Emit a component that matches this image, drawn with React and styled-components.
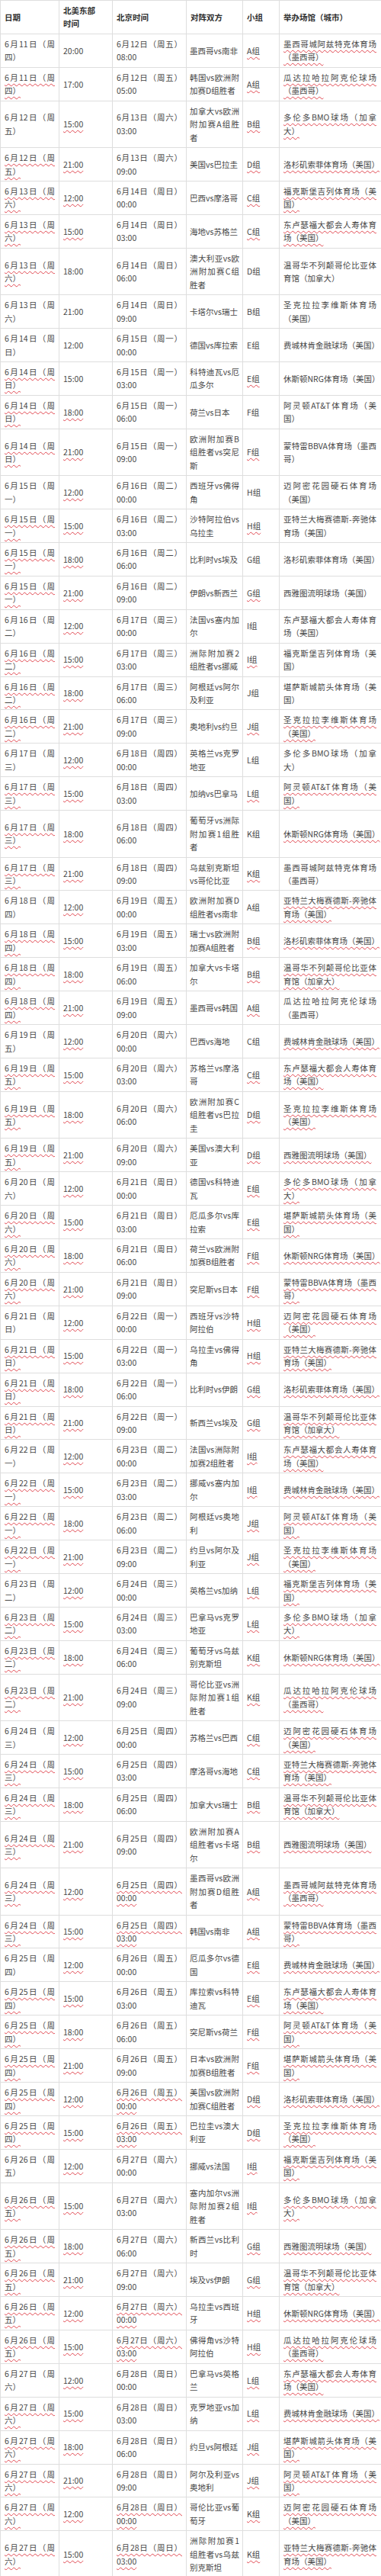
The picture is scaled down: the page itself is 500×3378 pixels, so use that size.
import React from "react";
import styled, { createGlobalStyle, css } from "styled-components";

const GlobalStyle = createGlobalStyle`
  html, body {
    margin: 0;
    padding: 0;
    background: #fff;
  }
  body {
    font-family: "Noto Sans CJK SC", "Noto Sans", sans-serif;
  }
`;

const Table = styled.table`
  width: 500px;
  table-layout: fixed;
  border-collapse: collapse;
  font-size: 10.5px;
  line-height: 17.45px;
  color: #474747;
`;

const Head = styled.th`
  padding: 4px 5px;
  border: 1px solid #dedede;
  text-align: left;
  font-weight: 700;
  color: #2e2e2e;
  vertical-align: middle;
`;

const Cell = styled.td`
  padding: ${(p) => p.$pad || "4px 5px"};
  border: 1px solid #dedede;
  vertical-align: middle;
  text-align: justify;
  ${(p) =>
    p.$wavy &&
    css`
      text-decoration: underline wavy #e0464f;
      text-decoration-thickness: 1px;
      text-underline-offset: 3px;
    `}
`;

// date, ET time, Beijing time, match, group, venue, wavy flags (date time bj group venue)
const rows = [
  ["6月11日（周四）", "20:00", "6月12日（周五）08:00", "墨西哥vs南非", "A组", "墨西哥城阿兹特克体育场（墨西哥）", "00011"],
  ["6月11日（周四）", "17:00", "6月12日（周五）05:00", "韩国vs欧洲附加赛D组胜者", "A组", "瓜达拉哈拉阿克伦球场（墨西哥）", "10011"],
  ["6月12日（周五）", "15:00", "6月13日（周六）03:00", "加拿大vs欧洲附加赛A组胜者", "B组", "多伦多BMO球场（加拿大）", "01011"],
  ["6月12日（周五）", "21:00", "6月13日（周六）09:00", "美国vs巴拉圭", "D组", "洛杉矶索菲体育场（美国）", "11011"],
  ["6月13日（周六）", "12:00", "6月14日（周日）00:00", "巴西vs摩洛哥", "C组", "福克斯堡吉列体育场（美国）", "11011"],
  ["6月13日（周六）", "15:00", "6月14日（周日）03:00", "海地vs苏格兰", "C组", "东卢瑟福大都会人寿体育场（美国）", "11011"],
  ["6月13日（周六）", "18:00", "6月14日（周日）06:00", "澳大利亚vs欧洲附加赛C组胜者", "D组", "温哥华不列颠哥伦比亚体育馆（加拿大）", "10000"],
  ["6月13日（周六）", "21:00", "6月14日（周日）09:00", "卡塔尔vs瑞士", "B组", "圣克拉拉李维斯体育场（美国）", "00000"],
  ["6月14日（周日）", "12:00", "6月15日（周一）00:00", "德国vs库拉索", "E组", "费城林肯金融球场（美国）", "00000"],
  ["6月14日（周日）", "15:00", "6月15日（周一）03:00", "科特迪瓦vs厄瓜多尔", "E组", "休斯顿NRG体育场（美国）", "10010"],
  ["6月14日（周日）", "18:00", "6月15日（周一）06:00", "荷兰vs日本", "F组", "阿灵顿AT&T体育场（美国）", "11000"],
  ["6月14日（周日）", "21:00", "6月15日（周一）09:00", "欧洲附加赛B组胜者vs突尼斯", "F组", "蒙特雷BBVA体育场（墨西哥）", "11010"],
  ["6月15日（周一）", "12:00", "6月16日（周二）00:00", "西班牙vs佛得角", "H组", "迈阿密花园硬石体育场（美国）", "01000"],
  ["6月15日（周一）", "15:00", "6月16日（周二）03:00", "沙特阿拉伯vs乌拉圭", "H组", "亚特兰大梅赛德斯-奔驰体育场（美国）", "11010"],
  ["6月15日（周一）", "18:00", "6月16日（周二）06:00", "比利时vs埃及", "G组", "洛杉矶索菲体育场（美国）", "11000"],
  ["6月15日（周一）", "21:00", "6月16日（周二）09:00", "伊朗vs新西兰", "G组", "西雅图流明球场（美国）", "11010"],
  ["6月16日（周二）", "12:00", "6月17日（周三）00:00", "法国vs塞内加尔", "I组", "东卢瑟福大都会人寿体育场（美国）", "01000"],
  ["6月16日（周二）", "15:00", "6月17日（周三）03:00", "洲际附加赛2组胜者vs挪威", "I组", "福克斯堡吉列体育场（美国）", "11010"],
  ["6月16日（周二）", "18:00", "6月17日（周三）06:00", "阿根廷vs阿尔及利亚", "J组", "堪萨斯城箭头体育场（美国）", "11000"],
  ["6月16日（周二）", "21:00", "6月17日（周三）09:00", "奥地利vs约旦", "J组", "圣克拉拉李维斯体育场（美国）", "11011"],
  ["6月17日（周三）", "12:00", "6月18日（周四）00:00", "英格兰vs克罗地亚", "L组", "多伦多BMO球场（加拿大）", "01000"],
  ["6月17日（周三）", "15:00", "6月18日（周四）03:00", "加纳vs巴拿马", "L组", "阿灵顿AT&T体育场（美国）", "11011"],
  ["6月17日（周三）", "18:00", "6月18日（周四）06:00", "葡萄牙vs洲际附加赛1组胜者", "K组", "休斯顿NRG体育场（美国）", "11001"],
  ["6月17日（周三）", "21:00", "6月18日（周四）09:00", "乌兹别克斯坦vs哥伦比亚", "K组", "墨西哥城阿兹特克体育场（墨西哥）", "11010"],
  ["6月18日（周四）", "12:00", "6月19日（周五）00:00", "欧洲附加赛D组胜者vs南非", "A组", "亚特兰大梅赛德斯-奔驰体育场（美国）", "01001"],
  ["6月18日（周四）", "15:00", "6月19日（周五）03:00", "瑞士vs欧洲附加赛A组胜者", "B组", "洛杉矶索菲体育场（美国）", "11011"],
  ["6月18日（周四）", "18:00", "6月19日（周五）06:00", "加拿大vs卡塔尔", "B组", "温哥华不列颠哥伦比亚体育馆（加拿大）", "11011"],
  ["6月18日（周四）", "21:00", "6月19日（周五）09:00", "墨西哥vs韩国", "A组", "瓜达拉哈拉阿克伦球场（墨西哥）", "11010"],
  ["6月19日（周五）", "12:00", "6月20日（周六）00:00", "巴西vs海地", "C组", "费城林肯金融球场（美国）", "01001"],
  ["6月19日（周五）", "15:00", "6月20日（周六）03:00", "苏格兰vs摩洛哥", "C组", "东卢瑟福大都会人寿体育场（美国）", "11011"],
  ["6月19日（周五）", "18:00", "6月20日（周六）06:00", "欧洲附加赛C组胜者vs巴拉圭", "D组", "圣克拉拉李维斯体育场（美国）", "11011"],
  ["6月19日（周五）", "21:00", "6月20日（周六）09:00", "美国vs澳大利亚", "D组", "西雅图流明球场（美国）", "11011"],
  ["6月20日（周六）", "12:00", "6月21日（周日）00:00", "德国vs科特迪瓦", "E组", "多伦多BMO球场（加拿大）", "01011"],
  ["6月20日（周六）", "15:00", "6月21日（周日）03:00", "厄瓜多尔vs库拉索", "E组", "堪萨斯城箭头体育场（美国）", "11011"],
  ["6月20日（周六）", "18:00", "6月21日（周日）06:00", "荷兰vs欧洲附加赛B组胜者", "F组", "休斯顿NRG体育场（美国）", "11011"],
  ["6月20日（周六）", "21:00", "6月21日（周日）09:00", "突尼斯vs日本", "F组", "蒙特雷BBVA体育场（墨西哥）", "11011"],
  ["6月21日（周日）", "12:00", "6月22日（周一）00:00", "西班牙vs沙特阿拉伯", "H组", "迈阿密花园硬石体育场（美国）", "01011"],
  ["6月21日（周日）", "15:00", "6月22日（周一）03:00", "乌拉圭vs佛得角", "H组", "亚特兰大梅赛德斯-奔驰体育场（美国）", "11011"],
  ["6月21日（周日）", "18:00", "6月22日（周一）06:00", "比利时vs伊朗", "G组", "洛杉矶索菲体育场（美国）", "11011"],
  ["6月21日（周日）", "21:00", "6月22日（周一）09:00", "新西兰vs埃及", "G组", "温哥华不列颠哥伦比亚体育馆（加拿大）", "11011"],
  ["6月22日（周一）", "12:00", "6月23日（周二）00:00", "法国vs洲际附加赛2组胜者", "I组", "东卢瑟福大都会人寿体育场（美国）", "01011"],
  ["6月22日（周一）", "15:00", "6月23日（周二）03:00", "挪威vs塞内加尔", "I组", "费城林肯金融球场（美国）", "11011"],
  ["6月22日（周一）", "18:00", "6月23日（周二）06:00", "阿根廷vs奥地利", "J组", "阿灵顿AT&T体育场（美国）", "11011"],
  ["6月22日（周一）", "21:00", "6月23日（周二）09:00", "约旦vs阿尔及利亚", "J组", "圣克拉拉李维斯体育场（美国）", "11011"],
  ["6月23日（周二）", "12:00", "6月24日（周三）00:00", "英格兰vs加纳", "L组", "福克斯堡吉列体育场（美国）", "01011"],
  ["6月23日（周二）", "15:00", "6月24日（周三）03:00", "巴拿马vs克罗地亚", "L组", "多伦多BMO球场（加拿大）", "11011"],
  ["6月23日（周二）", "18:00", "6月24日（周三）06:00", "葡萄牙vs乌兹别克斯坦", "K组", "休斯顿NRG体育场（美国）", "11011"],
  ["6月23日（周二）", "21:00", "6月24日（周三）09:00", "哥伦比亚vs洲际附加赛1组胜者", "K组", "瓜达拉哈拉阿克伦球场（墨西哥）", "11011"],
  ["6月24日（周三）", "12:00", "6月25日（周四）00:00", "苏格兰vs巴西", "C组", "迈阿密花园硬石体育场（美国）", "01011"],
  ["6月24日（周三）", "15:00", "6月25日（周四）03:00", "摩洛哥vs海地", "C组", "亚特兰大梅赛德斯-奔驰体育场（美国）", "11011"],
  ["6月24日（周三）", "18:00", "6月25日（周四）06:00", "加拿大vs瑞士", "B组", "温哥华不列颠哥伦比亚体育馆（加拿大）", "11011"],
  ["6月24日（周三）", "21:00", "6月25日（周四）09:00", "欧洲附加赛A组胜者vs卡塔尔", "B组", "西雅图流明球场（美国）", "11011"],
  ["6月24日（周三）", "12:00", "6月25日（周四）00:00", "墨西哥vs欧洲附加赛D组胜者", "A组", "墨西哥城阿兹特克体育场（墨西哥）", "11111"],
  ["6月24日（周三）", "15:00", "6月25日（周四）03:00", "韩国vs南非", "A组", "蒙特雷BBVA体育场（墨西哥）", "11111"],
  ["6月25日（周四）", "12:00", "6月26日（周五）00:00", "厄瓜多尔vs德国", "E组", "费城林肯金融球场（美国）", "01011"],
  ["6月25日（周四）", "15:00", "6月26日（周五）03:00", "库拉索vs科特迪瓦", "E组", "东卢瑟福大都会人寿体育场（美国）", "11011"],
  ["6月25日（周四）", "18:00", "6月26日（周五）06:00", "突尼斯vs荷兰", "F组", "阿灵顿AT&T体育场（美国）", "11011"],
  ["6月25日（周四）", "21:00", "6月26日（周五）09:00", "日本vs欧洲附加赛B组胜者", "F组", "堪萨斯城箭头体育场（美国）", "11011"],
  ["6月25日（周四）", "12:00", "6月26日（周五）00:00", "美国vs欧洲附加赛C组胜者", "D组", "洛杉矶索菲体育场（美国）", "11111"],
  ["6月25日（周四）", "15:00", "6月26日（周五）03:00", "巴拉圭vs澳大利亚", "D组", "圣克拉拉李维斯体育场（美国）", "11111"],
  ["6月26日（周五）", "12:00", "6月27日（周六）00:00", "挪威vs法国", "I组", "福克斯堡吉列体育场（美国）", "01011"],
  ["6月26日（周五）", "15:00", "6月27日（周六）03:00", "塞内加尔vs洲际附加赛2组胜者", "I组", "多伦多BMO球场（加拿大）", "11011"],
  ["6月26日（周五）", "18:00", "6月27日（周六）06:00", "新西兰vs比利时", "G组", "西雅图流明球场（美国）", "11011"],
  ["6月26日（周五）", "21:00", "6月27日（周六）09:00", "埃及vs伊朗", "G组", "温哥华不列颠哥伦比亚体育馆（加拿大）", "11011"],
  ["6月26日（周五）", "12:00", "6月27日（周六）00:00", "乌拉圭vs西班牙", "H组", "休斯顿NRG体育场（美国）", "11111"],
  ["6月26日（周五）", "15:00", "6月27日（周六）03:00", "佛得角vs沙特阿拉伯", "H组", "瓜达拉哈拉阿克伦球场（墨西哥）", "11111"],
  ["6月27日（周六）", "12:00", "6月28日（周日）00:00", "巴拿马vs英格兰", "L组", "东卢瑟福大都会人寿体育场（美国）", "01011"],
  ["6月27日（周六）", "15:00", "6月28日（周日）03:00", "克罗地亚vs加纳", "L组", "费城林肯金融球场（美国）", "11011"],
  ["6月27日（周六）", "18:00", "6月28日（周日）06:00", "约旦vs阿根廷", "J组", "堪萨斯城箭头体育场（美国）", "11011"],
  ["6月27日（周六）", "21:00", "6月28日（周日）09:00", "阿尔及利亚vs奥地利", "J组", "阿灵顿AT&T体育场（美国）", "11011"],
  ["6月27日（周六）", "12:00", "6月28日（周日）00:00", "哥伦比亚vs葡萄牙", "K组", "迈阿密花园硬石体育场（美国）", "11111"],
  ["6月27日（周六）", "15:00", "6月28日（周日）03:00", "洲际附加赛1组胜者vs乌兹别克斯坦", "K组", "亚特兰大梅赛德斯-奔驰体育场（美国）", "11111"],
];

const App = () => {
  return (
    <>
      <GlobalStyle />
      <Table>
        <colgroup>
          <col style={{ width: 77 }} />
          <col style={{ width: 70 }} />
          <col style={{ width: 97 }} />
          <col style={{ width: 74 }} />
          <col style={{ width: 48 }} />
          <col style={{ width: 134 }} />
        </colgroup>
        <thead>
          <tr>
            <Head>日期</Head>
            <Head>
              北美东部
              <br />
              时间
            </Head>
            <Head>北京时间</Head>
            <Head>对阵双方</Head>
            <Head>小组</Head>
            <Head>举办场馆（城市）</Head>
          </tr>
        </thead>
        <tbody>
          {rows.map(([date, time, bj, match, group, venue, f], i) => (
            <tr key={i}>
              <Cell $wavy={f[0] === "1"}>{date}</Cell>
              <Cell $wavy={f[1] === "1"}>{time}</Cell>
              <Cell $wavy={f[2] === "1"}>{bj}</Cell>
              <Cell $pad="4px">{match}</Cell>
              <Cell $wavy={f[3] === "1"}>{group}</Cell>
              <Cell $pad="4px 6px 4px 5px" $wavy={f[4] === "1"}>
                {venue}
              </Cell>
            </tr>
          ))}
        </tbody>
      </Table>
    </>
  );
};

export default App;
